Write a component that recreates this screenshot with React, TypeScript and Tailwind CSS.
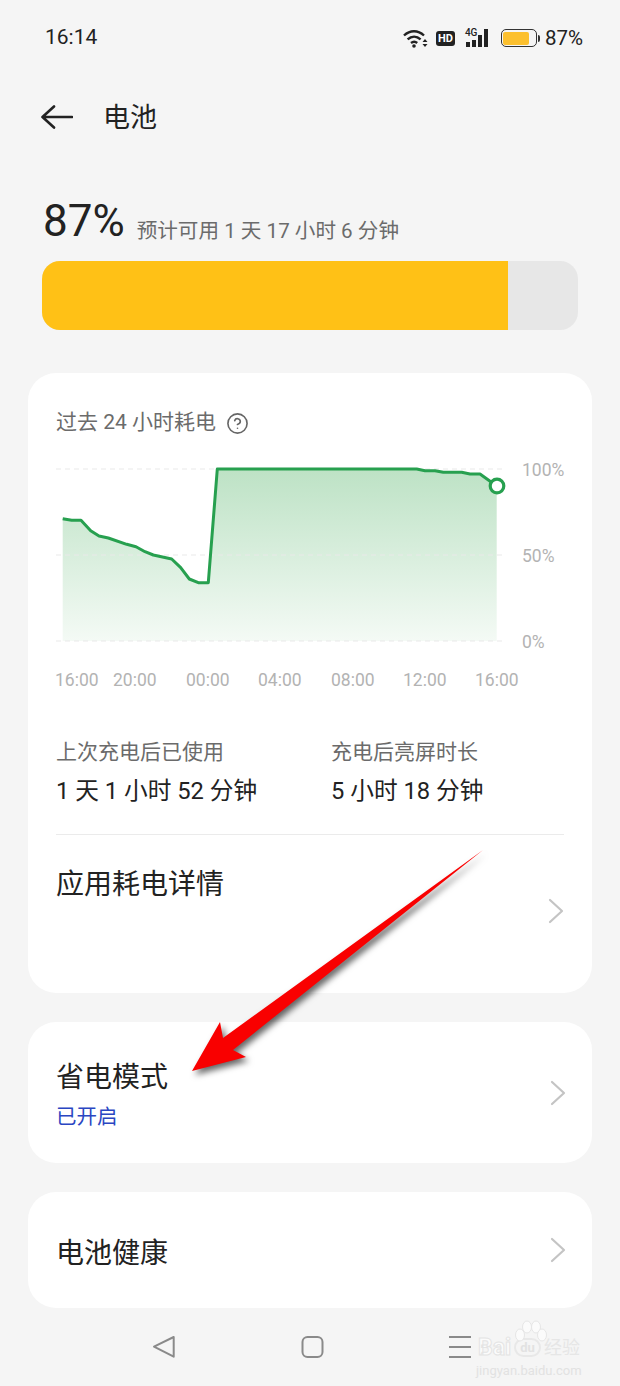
import React from 'react';
import { CircleHelp } from 'lucide-react';

const font = { fontFamily: '"Roboto", "Noto Sans CJK SC", sans-serif' };

const linePts =
  '62.7,518.7 71.7,520.3 81,520.3 90.7,530.7 99,536 108.3,538 126.7,544.3 136,546.7 145,551.7 153.3,555 171.7,559 180.7,567.7 189.3,579 198.3,582.7 208.3,582.7 217.3,469 416.7,469 425,470.7 435,470.7 443.3,472.3 461.7,472.3 470,474 480,474 496.7,486';

const Chevron = () => (
  <svg width="16" height="26" viewBox="0 0 16 26" fill="none" className="shrink-0">
    <path d="M2 2l12 11L2 24" stroke="#c4c4c4" strokeWidth="2.2" strokeLinecap="round" strokeLinejoin="round" />
  </svg>
);

const StatusBar = () => (
  <div className="flex items-center h-[74px] pl-[45px] pr-[37px] pt-[2px] text-[#222]">
    <span className="text-[21px] flex-1">16:14</span>
    <svg width="25" height="19" viewBox="0 0 25 19" fill="none" className="mr-[8px]">
      <path d="M1 6.5C7 .8 15 .8 21 6.5" stroke="#222" strokeWidth="2.4" />
      <path d="M4.6 10.4c4-3.6 9-3.6 13 0" stroke="#222" strokeWidth="2.4" />
      <path d="M8 14c2-1.6 4.4-1.6 6.2 0" stroke="#222" strokeWidth="2.4" />
      <circle cx="11" cy="17" r="1.8" fill="#222" />
      <path d="M19.5 13l2.5-3 2.5 3zM19.5 15l2.5 3 2.5-3z" fill="#222" />
    </svg>
    <span className="w-[19px] h-[15px] mr-[11px] rounded-[3px] bg-[#222] text-white text-[11px] leading-[15px] font-bold text-center">HD</span>
    <span className="relative w-[25px] h-[18px] mr-[10px] flex items-end gap-[2px]">
      <span className="absolute -left-[1px] -top-[1px] text-[10px] leading-[10px] font-medium">4G</span>
      <span className="w-[4px] h-[5px] bg-[#222]" />
      <span className="w-[4px] h-[7px] bg-[#222]" />
      <span className="w-[4px] h-[12px] bg-[#222]" />
      <span className="w-[4px] h-[18px] bg-[#222]" />
    </span>
    <span className="w-[36px] h-[18px] rounded-[5px] border-[1.5px] border-[#333] p-[1.5px] pr-[7px]">
      <span className="block h-full rounded-[2px] bg-[#fcc02e]" />
    </span>
    <span className="w-[2px] h-[7px] bg-[#333] rounded-r-sm ml-[1px] mr-[5px]" />
    <span className="text-[20.5px]">87%</span>
  </div>
);

const Chart = () => (
  <div className="flex mt-[23px] gap-[16px]">
    <svg width="450" height="192" viewBox="56 460 450 192" fill="none" className="shrink-0">
      <defs>
        <linearGradient id="area" x1="0" y1="469" x2="0" y2="641" gradientUnits="userSpaceOnUse">
          <stop offset="0" stopColor="#bde2c5" />
          <stop offset="1" stopColor="#f4faf5" />
        </linearGradient>
      </defs>
      <polygon points={`${linePts} 496.7,641 62.7,641`} fill="url(#area)" />
      <path d="M56 469H504M56 555H504M56 641H504" stroke="#e9e9e9" strokeWidth="1" strokeDasharray="5 4" />
      <polyline points={linePts} stroke="#27a04f" strokeWidth="3" strokeLinejoin="round" />
      <circle cx="497" cy="486" r="6.8" fill="#fff" stroke="#27a04f" strokeWidth="3.2" />
    </svg>
    <div className="h-[192px] flex flex-col justify-between text-[17.5px] leading-[20px] text-[#b3b3b3]">
      <span>100%</span>
      <span>50%</span>
      <span>0%</span>
    </div>
  </div>
);

const Navbar = () => (
  <div className="relative flex-1">
    <svg width="620" height="78" viewBox="0 1308 620 78" fill="none">
      <path d="M154 1346.7L173.7 1337V1356.7Z" stroke="#8a8a8a" strokeWidth="2" strokeLinejoin="round" />
      <rect x="302.5" y="1337" width="20" height="20" rx="5" stroke="#8a8a8a" strokeWidth="2" />
      <path d="M449 1337H471M449 1347H471M449 1357H471" stroke="#8a8a8a" strokeWidth="2" />
    </svg>
    {/* baidu watermark */}
    <div className="absolute left-[478px] top-[28px] w-[112px] leading-none">
      <svg width="34" height="24" viewBox="0 0 34 24" fill="none" className="absolute left-[36px] -top-[16px]">
        <g stroke="#e6e6e6" strokeWidth="1" fill="#fbfbfb">
          <ellipse cx="6" cy="15" rx="4.5" ry="6" />
          <ellipse cx="13" cy="7" rx="4.5" ry="6" />
          <ellipse cx="22" cy="7" rx="4.5" ry="6" />
          <ellipse cx="28" cy="15" rx="4.5" ry="6" />
        </g>
      </svg>
      <div className="flex items-center">
        <span className="text-[23px] font-bold text-[#fbfbfb]" style={{ WebkitTextStroke: '1px #e4e4e4' }}>Bai</span>
        <span className="w-[27px] h-[19px] ml-[3px] rounded-full border-2 border-[#e8e8e8] text-[13px] font-bold text-center leading-[15px] text-[#e2e2e2]">du</span>
        <span className="ml-[3px] text-[18px] text-[#e6e6e6]">经验</span>
      </div>
      <div className="mt-[5px] -ml-[2px] text-[13px] text-[#e2e2e2] whitespace-nowrap">jingyan.baidu.com</div>
    </div>
  </div>
);

export default function App() {
  return (
    <div style={font} className="relative w-[620px] h-[1386px] overflow-hidden bg-[#f5f5f5] flex flex-col">
      <StatusBar />

      <div className="flex items-center h-[86px] pl-[41px]">
        <svg width="32" height="24" viewBox="0 0 32 24" fill="none">
          <path d="M31 12H2M13 1.5L1.5 12 13 22.5" stroke="#222" strokeWidth="2.6" strokeLinejoin="round" strokeLinecap="round" />
        </svg>
        <span className="ml-[30px] pt-[3px] text-[27px] text-[#222]">电池</span>
      </div>

      <div className="flex items-end pl-[43px] pt-[32px] h-[101px] pb-[13px]">
        <span className="text-[44px] leading-[54px] text-[#222]">87%</span>
        <span className="ml-[12px] mb-[2px] text-[20.6px] leading-[30px] text-[#6b6b6b] whitespace-pre">预计可用 1 天 17 小时 6 分钟</span>
      </div>

      <div className="mx-[42px] h-[69px] rounded-[18px] overflow-hidden bg-[#e7e7e7]">
        <div className="w-[466px] h-full bg-[#ffc116]" />
      </div>

      <div className="mx-[28px] mt-[43px] h-[620px] rounded-[28px] bg-white px-[28px] pt-[36px] flex flex-col">
        <div className="flex items-center h-[28px] text-[21px] text-[#6b6b6b] whitespace-pre">
          <span>过去 24 小时耗电</span>
          <CircleHelp size={23} strokeWidth={1.7} className="ml-[10px] text-[#666]" />
        </div>

        <Chart />

        <div className="grid grid-cols-[58px_73px_72px_73px_72px_72px_auto] -ml-px mt-[16px] text-[17.5px] leading-[24px] text-[#b3b3b3]">
          <span>16:00</span>
          <span>20:00</span>
          <span>00:00</span>
          <span>04:00</span>
          <span>08:00</span>
          <span>12:00</span>
          <span>16:00</span>
        </div>

        <div className="flex mt-[45px] h-[98px] border-b border-[#ebebeb]">
          <div className="w-[275px]">
            <div className="text-[21px] leading-[30px] text-[#6b6b6b]">上次充电后已使用</div>
            <div className="mt-[7px] text-[23.7px] leading-[34px] text-[#222] whitespace-pre">1 天 1 小时 52 分钟</div>
          </div>
          <div>
            <div className="text-[21px] leading-[30px] text-[#6b6b6b]">充电后亮屏时长</div>
            <div className="mt-[7px] text-[23.7px] leading-[34px] text-[#222] whitespace-pre">5 小时 18 分钟</div>
          </div>
        </div>

        <div className="flex justify-between items-center pt-[30px] flex-1">
          <div className="self-start text-[28px] leading-[40px] text-[#222]">应用耗电详情</div>
          <div className="pb-[36px]"><Chevron /></div>
        </div>
      </div>

      <div className="mx-[28px] mt-[29px] h-[141px] rounded-[28px] bg-white px-[28px] pr-[26px] flex items-center justify-between">
        <div className="pt-[4px]">
          <div className="text-[28px] leading-[40px] text-[#222]">省电模式</div>
          <div className="mt-[4px] text-[20.5px] leading-[30px] text-[#2a46c2]">已开启</div>
        </div>
        <Chevron />
      </div>

      <div className="mx-[28px] mt-[29px] h-[116px] rounded-[28px] bg-white px-[28px] pr-[26px] flex items-center justify-between">
        <div className="pt-[7px] text-[28px] leading-[40px] text-[#222]">电池健康</div>
        <Chevron />
      </div>

      <Navbar />

      {/* red arrow pasted over the screenshot */}
      <svg className="absolute left-0 top-0 pointer-events-none drop-shadow-[3px_4px_3px_rgba(0,0,0,0.6)]" width="620" height="1386" viewBox="0 0 620 1386">
        <polygon points="483,850 233,1050 246,1057 192,1071 220,1022 223,1038" fill="#f90000" />
      </svg>
    </div>
  );
}
